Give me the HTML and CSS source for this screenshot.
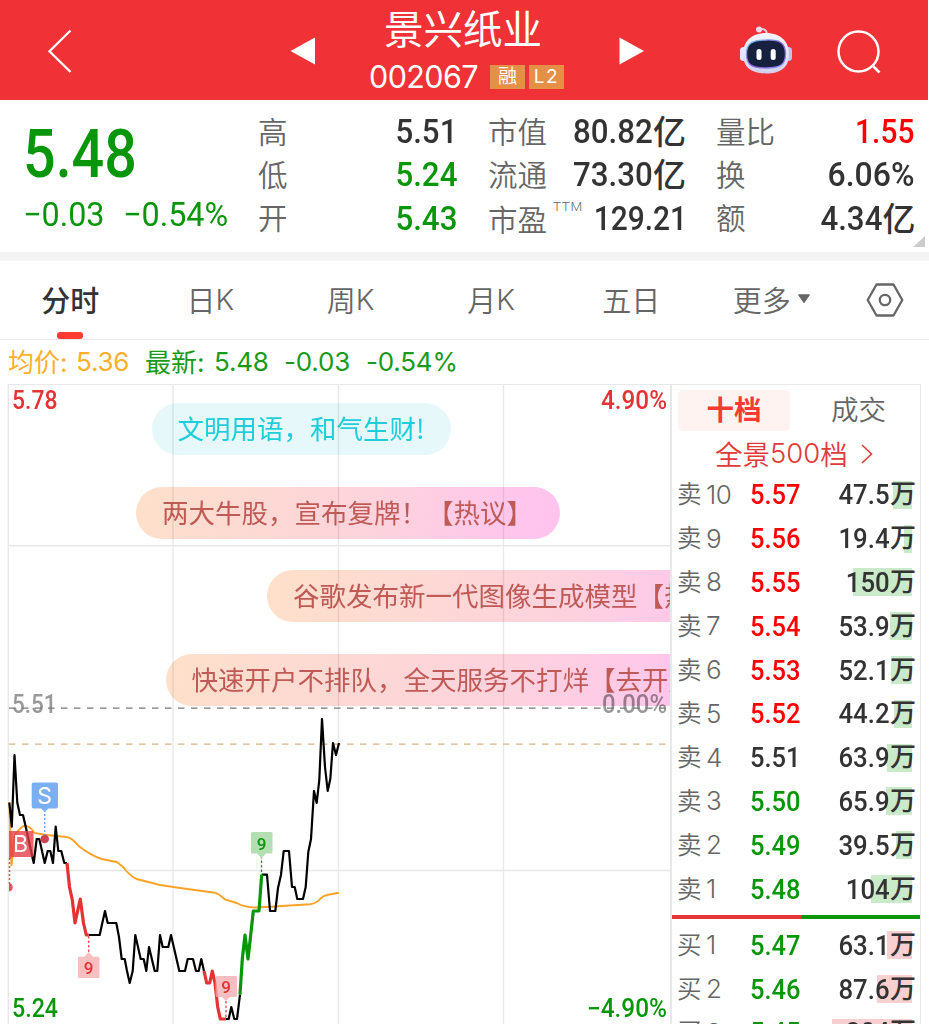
FILE: index.html
```html
<!DOCTYPE html>
<html lang="zh-CN">
<head>
<meta charset="utf-8">
<title>景兴纸业 002067</title>
<link rel="stylesheet" href="styles.css">
</head>
<body>
<div class="app">
  <header class="topbar">
    <svg class="back" width="26" height="44" viewBox="0 0 26 44"><path d="M23.500 1.500L2.500 22.200L23.500 43" fill="none" stroke="#fff" stroke-width="2.300"/></svg>
    <svg class="prev" width="26" height="28" viewBox="0 0 26 28"><path d="M25 0.500V27.500L0.500 14Z" fill="#fff"/></svg>
    <div class="title">
      <div class="name">景兴纸业</div>
      <div class="code-row"><span class="code">002067</span><span class="badge">融</span><span class="badge latin">L2</span></div>
    </div>
    <svg class="next" width="26" height="28" viewBox="0 0 26 28"><path d="M0.500 0.500V27.500L25 14Z" fill="#fff"/></svg>
    <svg class="robot" width="54" height="50" viewBox="0 0 54 50">
      <defs>
        <linearGradient id="shell" x1="0" y1="0" x2="0" y2="1"><stop offset="0" stop-color="#f5f6fd"/><stop offset="1" stop-color="#d3d0ef"/></linearGradient>
        <linearGradient id="rim" x1="0" y1="0" x2="1" y2="1"><stop offset="0" stop-color="#79d5e8"/><stop offset=".5" stop-color="#8c63e8"/><stop offset="1" stop-color="#8c8ff0"/></linearGradient>
      </defs>
      <path d="M20 4.500C25 3 28 5 28 10" fill="none" stroke="#dfc9dc" stroke-width="2"/>
      <circle cx="20" cy="4.500" r="3" fill="#eadced"/>
      <rect x="1" y="22" width="7" height="14" rx="3.500" fill="#e5e7f9"/>
      <rect x="46" y="22" width="7" height="14" rx="3.500" fill="#bfc1ee"/>
      <path d="M27 8C42 8 50 17 50 29C50 43 41 48.500 27 48.500S4 43 4 29C4 17 12 8 27 8Z" fill="url(#shell)"/>
      <path d="M27 15C41 14.500 46.500 18 46.500 29S41 43 27 43S7.500 40 7.500 29S13 15 27 15Z" fill="#17213f" stroke="url(#rim)" stroke-width="1.300"/>
      <rect x="17.500" y="24" width="5" height="11" rx="2.500" fill="#fff"/><rect x="31.700" y="24" width="5" height="11" rx="2.500" fill="#fff"/>
    </svg>
    <svg class="search" width="46" height="44" viewBox="0 0 46 44"><circle cx="21.500" cy="21.500" r="20" fill="none" stroke="#fff" stroke-width="2.500"/><path d="M35 35L42.500 42.500" stroke="#fff" stroke-width="2.700"/></svg>
  </header>

  <section class="quote">
    <div class="last">
      <div class="price"><span class="num">5.48</span></div>
      <div class="change"><span class="num">−0.03</span><span class="num">−0.54%</span></div>
    </div>
    <dl class="stats s1">
      <div><dt>高</dt><dd><span class="num">5.51</span></dd></div>
      <div class="down"><dt>低</dt><dd><span class="num">5.24</span></dd></div>
      <div class="down"><dt>开</dt><dd><span class="num">5.43</span></dd></div>
    </dl>
    <dl class="stats s2">
      <div><dt>市值</dt><dd><span class="num">80.82</span><em>亿</em></dd></div>
      <div><dt>流通</dt><dd><span class="num">73.30</span><em>亿</em></dd></div>
      <div><dt class="low">市盈<sup>TTM</sup></dt><dd><span class="num tight">129.21</span></dd></div>
    </dl>
    <dl class="stats s3">
      <div class="up"><dt>量比</dt><dd><span class="num tight">1.55</span></dd></div>
      <div><dt>换</dt><dd><span class="num wide">6.06%</span></dd></div>
      <div><dt>额</dt><dd><span class="num">4.34</span><em>亿</em></dd></div>
    </dl>
    <i class="expand"></i>
  </section>

  <nav class="tabs">
    <a class="tab active">分时</a><a class="tab">日<b>K</b></a><a class="tab">周<b>K</b></a><a class="tab">月<b>K</b></a><a class="tab">五日</a>
    <a class="tab">更多<svg width="14" height="10" viewBox="0 0 14 10"><path d="M1.500 .8H12.500L7 8.800Z" fill="#666" stroke="#666" stroke-linejoin="round"/></svg></a>
    <svg class="settings" width="38" height="34" viewBox="0 0 38 34"><path d="M10.500 1.500H27.500L36.300 17L27.500 32.500H10.500L1.700 17Z" fill="none" stroke="#666" stroke-width="2.300" stroke-linejoin="round"/><circle cx="19" cy="17" r="5.200" fill="none" stroke="#666" stroke-width="2.300"/></svg>
  </nav>

  <div class="summary"><span class="avg zh">均价:</span><span class="avg">5.36</span><span class="zh">最新:</span><span>5.48</span><span>-0.03</span><span>-0.54%</span></div>

  <main class="board">
    <section class="chart">
      <svg class="plot" width="672" height="640" viewBox="0 384 672 640">
        <g fill="none" stroke="#e8e8e8" stroke-width="1.400">
          <path d="M8 384.300H672M8.300 384V1024M173 384V1024M338.500 384V1024M503.500 384V1024M8 545.700H671M8 870.500H671"/>
        </g>
        <g class="axis">
          <text x="12" y="408.500" class="red" textLength="45.500" lengthAdjust="spacingAndGlyphs">5.78</text>
          <text x="601" y="408.500" class="red" textLength="66" lengthAdjust="spacingAndGlyphs">4.90%</text>
          <text x="12" y="713" class="flat" textLength="44.500" lengthAdjust="spacingAndGlyphs">5.51</text>
          <text x="602" y="713" class="flat" textLength="65" lengthAdjust="spacingAndGlyphs">0.00%</text>
          <text x="12" y="1017" class="green" textLength="46" lengthAdjust="spacingAndGlyphs">5.24</text>
          <text x="587" y="1017" class="green" textLength="80" lengthAdjust="spacingAndGlyphs">−4.90%</text>
        </g>
        <path d="M9 708.200H667" stroke="#777" stroke-width="1.300" stroke-dasharray="6.500 6.500"/>
        <path d="M9 744.200H667" stroke="#d8b480" stroke-width="1.300" stroke-dasharray="6.500 6.500"/>
        <path class="mean" d="M9.300 802L11.500 866L14 838Q16 831 23.500 826Q30 825 34.300 833L46.700 835L66.700 837Q72 838 78.300 845.700Q90 855 101.700 859L116.700 862Q121 865 123 867Q131 877 136.700 879L160 885L180 888L215 892.700Q219 894 225 899.500L236.700 903Q245 907.500 255 907.500L270 906.700L290 905.500L310 904.300Q317 903 320 899Q323 895.700 327 895L339 892.700"/>
        <g class="line">
          <path d="M9.300 802.700L11.800 826.700L14.500 755L17.300 802.700L20 815H23L25.700 826.700L33.700 863L36.700 839H39.300L44.700 863L47.700 851H50.300L53 863L55.700 826.700L58.300 851H61.300L64.300 863H67"/>
          <path d="M88.700 935H99.700L102.300 923L105 911L107.700 923H116.300L119 937L121.700 959H124.700L127 971L129.700 983L132.700 971L135.300 935L138 947L140.700 959H143.700L146.300 971L149 947L154.700 971H157.300L160 935L162.700 947H168.300L171 935L179.300 971H185L187.700 959H193L196 971H198.700L201.300 959L204 971"/>
          <path d="M226 1019H228.700L231.300 1007L234.300 1019H237L240 994.700"/>
          <path d="M261.700 874.700H267L270 911H275.300L278 888L281 874.700L283.700 851H289L292 887H294.700L297.300 899H303L305.700 887L308.300 852L311 839L314 791L316.700 803L319.300 780L322 719L325 767L327.700 791L330.300 779L333 743L336 755L339 743"/>
        </g>
        <g class="signal">
          <path stroke="#e53232" d="M67 863L69.500 887L72.300 900L75 923L80.300 899L83.500 923L86.300 935H88.700M204 971L206.700 983H209.700L212.300 971L215 983L217.700 1007L220.300 1019H226"/>
          <path stroke="#0a960a" d="M240 994.700L242.300 959L245 935L248 959L250.700 935L253.300 911H259L261.700 874.700"/>
        </g>
        <path d="M44.700 810V835" stroke="#6eabf0" stroke-width="1.500" stroke-dasharray="2 2"/><circle cx="44.700" cy="839" r="4.300" fill="#cc4455"/>
        <path d="M33.500 782.500H56Q58 782.500 58 784.500V806.500Q58 808.500 56 808.500H48.500L44.700 812L41 808.500H33.500Q31.700 808.500 31.700 806.500V784.500Q31.700 782.500 33.500 782.500Z" fill="#7aaff3"/>
        <text x="44.700" y="804" class="mark white">S</text>
        <path d="M9.500 858V884" stroke="#e45" stroke-width="1.500" stroke-dasharray="2 2"/><path d="M9 883A4.300 4.300 0 0 1 9 891.500Z" fill="#e4525c"/>
        <path d="M9 831H32Q33.500 831 33.500 833V855Q33.500 857 32 857H12L9 860Z" fill="#e63a42" fill-opacity=".78"/>
        <text x="20.500" y="852" class="mark white">B</text>
        <path d="M88.700 936V954" stroke="#e45" stroke-width="1.300" stroke-dasharray="2.500 2"/><path d="M79.500 956.700H84.500L88.700 952L93 956.700H98Q99.500 956.700 99.500 958V976.700Q99.500 978 98 978H79.500Q78 978 78 976.700V958Q78 956.700 79.500 956.700Z" fill="#f8bfc1"/><text x="88.500" y="973.800" class="mark small redmark">9</text>
        <path d="M226 1001V1017" stroke="#e45" stroke-width="1.300" stroke-dasharray="2.500 2"/><path d="M217 976H235.500Q237 976 237 977.500V995.500Q237 997 235.500 997H230L226 1001L222 997H217Q215.500 997 215.500 995.500V977.500Q215.500 976 217 976Z" fill="#f5aaae" fill-opacity=".75"/><text x="226" y="993.300" class="mark small redmark">9</text>
        <path d="M261.500 856V874" stroke="#0a960a" stroke-width="1.300" stroke-dasharray="2.500 2"/><path d="M252.500 832H271Q272.500 832 272.500 833.500V852Q272.500 853.500 271 853.500H266L261.500 858L257 853.500H252.500Q251 853.500 251 852V833.500Q251 832 252.500 832Z" fill="#b3dfb3"/><text x="261.500" y="849.500" class="mark small greenmark">9</text>
      </svg>
      <div class="pill p1">文明用语，和气生财!</div>
      <div class="pill p2">两大牛股，宣布复牌！【热议】</div>
      <div class="pill p3">谷歌发布新一代图像生成模型【热议】</div>
      <div class="pill p4">快速开户不排队，全天服务不打烊【去开户】</div>
    </section>

    <aside class="book">
      <div class="book-tabs"><span class="on">十档</span><span>成交</span></div>
      <div class="panorama">全景<span>500</span>档<svg width="12" height="22" viewBox="0 0 12 22"><path d="M1 2L10.500 11L1 20" fill="none" stroke="#e23a36" stroke-width="1.600"/></svg></div>
      <div class="levels asks">
        <div class="level up"><span class="side">卖<b>10</b></span><span class="num">5.57</span><span class="vol"><i style="width:19px"></i><span class="num">47.5</span><em>万</em></span></div>
        <div class="level up"><span class="side">卖<b>9</b></span><span class="num">5.56</span><span class="vol"><i style="width:7.500px"></i><span class="num">19.4</span><em>万</em></span></div>
        <div class="level up"><span class="side">卖<b>8</b></span><span class="num">5.55</span><span class="vol"><i style="width:58.700px"></i><span class="num">150</span><em>万</em></span></div>
        <div class="level up"><span class="side">卖<b>7</b></span><span class="num">5.54</span><span class="vol"><i style="width:21.300px"></i><span class="num">53.9</span><em>万</em></span></div>
        <div class="level up"><span class="side">卖<b>6</b></span><span class="num">5.53</span><span class="vol"><i style="width:20.700px"></i><span class="num">52.1</span><em>万</em></span></div>
        <div class="level up"><span class="side">卖<b>5</b></span><span class="num">5.52</span><span class="vol"><i style="width:17.700px"></i><span class="num">44.2</span><em>万</em></span></div>
        <div class="level"><span class="side">卖<b>4</b></span><span class="num">5.51</span><span class="vol"><i style="width:24.300px"></i><span class="num">63.9</span><em>万</em></span></div>
        <div class="level down"><span class="side">卖<b>3</b></span><span class="num">5.50</span><span class="vol"><i style="width:25.300px"></i><span class="num">65.9</span><em>万</em></span></div>
        <div class="level down"><span class="side">卖<b>2</b></span><span class="num">5.49</span><span class="vol"><i style="width:15.300px"></i><span class="num">39.5</span><em>万</em></span></div>
        <div class="level down"><span class="side">卖<b>1</b></span><span class="num">5.48</span><span class="vol"><i style="width:40.300px"></i><span class="num">104</span><em>万</em></span></div>
      </div>
      <div class="ratio"><i></i></div>
      <div class="levels bids">
        <div class="level down"><span class="side">买<b>1</b></span><span class="num">5.47</span><span class="vol"><i style="width:24.700px"></i><span class="num">63.1</span><em>万</em></span></div>
        <div class="level down"><span class="side">买<b>2</b></span><span class="num">5.46</span><span class="vol"><i style="width:34.300px"></i><span class="num">87.6</span><em>万</em></span></div>
        <div class="level down"><span class="side">买<b>3</b></span><span class="num">5.45</span><span class="vol"><i style="width:79.300px"></i><span class="num">204</span><em>万</em></span></div>
      </div>
    </aside>
  </main>
</div>
</body>
</html>
```
FILE: styles.css
```css
* { box-sizing: border-box; }
body {
  margin: 0;
  background: #fff;
  color: #333;
  font-family: Inter, "Noto Sans CJK SC", sans-serif;
}
.app { width: 929px; height: 1024px; overflow: hidden; display: flex; flex-direction: column; }
svg { display: block; flex: none; }
b { font-weight: inherit; }
em { font-style: normal; }
.num { display: inline-block; font-family: Roboto, sans-serif; font-weight: 500; transform-origin: right center; }
.up { color: #f00; }
.down { color: #0a960a; }

/* top bar */
.topbar { width: 928px; height: 99.500px; flex: none; display: flex; align-items: flex-start; background: #f03136; color: #fff; }
.back { margin: 29px 0 0 47px; }
.prev { margin: 37px 0 0 217px; }
.title { width: 196px; margin-left: 51px; }
.name { height: 57px; padding-left: 17px; line-height: 53px; font-size: 39.500px; font-weight: 400; white-space: nowrap; font-family: "Noto Sans CJK SC", sans-serif; }
.code-row { display: flex; align-items: center; height: 40px; }
.code { width: 122px; flex: none; margin-top: -2px; font-size: 30.500px; font-weight: 400; letter-spacing: -.6px; padding-left: 2px; }
.badge { width: 35px; height: 24px; margin: 0 4px 0 0; flex: none; background: #e58f47; font-size: 19px; font-weight: 400; line-height: 23px; text-align: center; }
.badge:first-of-type, .code + .badge { margin-left: 0; }
.code { margin-right: -1px; width: 123px; }
.code + .badge { margin-left: 1px; }
.badge.latin { letter-spacing: 1.500px; }
.code-row { padding-left: 0; width: 200px; }
.next { margin: 37px 0 0 56px; }
.robot { margin: 25px 0 0 94px; }
.search { margin: 30px 0 0 44px; }

/* quote */
.quote { position: relative; height: 161.500px; flex: none; display: flex; border-bottom: 9px solid #f4f4f4; }
.last { width: 258px; padding: 15px 0 0 23px; color: #0a960a; }
.last .num { transform-origin: left center; }
.price { height: 76px; line-height: 76px; font-size: 66px; }
.price .num { transform: scaleX(.87); }
.change { display: flex; height: 48px; line-height: 48px; font-size: 33.500px; }
.change .num { width: 100px; font-weight: 450; transform: scaleX(.965); }
.stats { margin: 10.500px 0 0; }
.stats > div { display: flex; justify-content: space-between; height: 43.300px; line-height: 43.300px; font-size: 34px; }
.stats dt { margin-top: -1.500px; color: #666; font-size: 29.500px; font-weight: 350; white-space: nowrap; font-family: "Noto Sans CJK SC", sans-serif; }
.stats dt.low { padding-top: 2px; }
.stats sup { display: inline-block; margin-left: 6px; font-size: 13.500px; line-height: 15px; vertical-align: 20px; letter-spacing: .6px; width: 28px; font-family: Roboto, sans-serif; }
.stats dd { margin: 0; display: flex; justify-content: flex-end; font-family: "Noto Sans CJK SC", sans-serif; font-weight: 500; font-size: 33px; }
.stats dd em { margin-top: -1px; font-weight: 450; }
.stats .num { transform: scaleX(.92); font-size: 34px; }
.stats .num.wide { transform: scaleX(.94); margin-right: 1.500px; }
.stats .num.tight { transform: scaleX(.88); margin-right: 1px; }
.s1 { width: 199px; }
.s2 { width: 198px; margin-left: 31px; }
.s3 { width: 199.500px; margin-left: 30px; }
.expand { position: absolute; left: 913px; top: 136.500px; border-left: 12px solid transparent; border-bottom: 11px solid #ccc; }

/* period tabs */
.tabs { height: 78.500px; flex: none; display: flex; border-bottom: 1.500px solid #e8e8e8; }
.tab { width: 140.300px; height: 76px; position: relative; display: flex; justify-content: center; align-items: center; font-size: 29px; font-weight: 350; color: #666; }
.tab svg { margin-left: 6px; margin-top: 0; }
.tab.active { font-weight: 500; color: #333; }
.tab.active::after { content: ""; position: absolute; left: 57px; top: 71px; width: 26px; height: 7px; border-radius: 3px; background: #ff3b32; }
.settings { margin: 22px 0 0 24px; }

/* price summary */
.summary { height: 44.500px; flex: none; display: grid; grid-template-columns: 68px 69px 69px 70px 82px 100px; padding-left: 8px; align-items: center; white-space: nowrap; font-size: 26px; letter-spacing: -.2px; color: #1a9a1a; }
.summary .zh { margin-top: -2px; letter-spacing: 0; }
.summary .avg { color: #fbb02d; }

/* chart */
.board { height: 640px; flex: none; display: flex; }
.chart { position: relative; width: 672px; border-right: 2px solid #e8e8e8; overflow: hidden; isolation: isolate; background: #fff; }
.axis { font: 500 25px Roboto, sans-serif; }
.axis .red { fill: #e23434; }
.axis .green { fill: #0a960a; }
.axis .flat { fill: #999; }
.mean { fill: none; stroke: #fba228; stroke-width: 1.900; }
.line { fill: none; stroke: #000; stroke-width: 2.200; stroke-linejoin: round; }
.signal { fill: none; stroke-width: 3.200; stroke-linejoin: round; }
.mark { font: 400 23px Inter, sans-serif; text-anchor: middle; }
.mark.small { font: 500 17px Roboto, sans-serif; }
.white { fill: #fff; }
.redmark { fill: #e53232; }
.greenmark { fill: #0a960a; }
.pill { position: absolute; height: 52px; padding: 0 26px; border-radius: 26px; line-height: 50px; font-size: 26.500px; font-weight: 400; white-space: nowrap; color: #c05a56; font-family: "Noto Sans CJK SC", sans-serif; text-spacing-trim: space-all; mix-blend-mode: multiply; background: linear-gradient(100deg, #fee0ca 0%, #fdd9d4 30%, #fdd2de 60%, #ffc7eb 85%, #ffc3ee 100%); }
.p1 { left: 151.500px; top: 19px; width: 299px; color: #20cddb; background: #e6f8fa; }
.p2 { left: 136px; top: 103px; width: 424px; }
.p3 { left: 267px; top: 186px; width: 503px; }
.p4 { left: 165.500px; top: 270px; width: 582px; }

/* order book */
.book { width: 249px; border-top: 1px solid #e8e8e8; border-right: 1.500px solid #e8e8e8; }
.book-tabs { display: flex; margin: 5px 0 0 6px; height: 41px; }
.book-tabs span { width: 125px; flex: none; text-align: center; line-height: 41px; font-size: 27.500px; font-weight: 350; color: #666; margin-left: 6px; }
.book-tabs .on { width: 112px; margin: 0; border-radius: 5px; background: #fff3f2; color: #f93a35; font-weight: 600; }
.panorama { display: flex; align-items: center; height: 44px; margin-bottom: 2px; padding-left: 43px; font-size: 27.500px; font-weight: 350; color: #e23a36; }
.panorama svg { margin-left: 13px; margin-top: 2px; }
.level { position: relative; display: flex; align-items: center; height: 43.800px; padding: 0 5px 0 5px; }
.asks { margin-top: -4px; }
.side { width: 73px; display: flex; align-items: center; font-size: 24.500px; line-height: 40px; font-weight: 350; color: #666; margin-top: -1px; }
.side b { margin-left: 4.500px; margin-top: 1px; font-size: 26px; letter-spacing: -.5px; }
.level .num { font-size: 28px; }
.level > .num { width: 56px; transform: scaleX(.91); transform-origin: left center; }
.vol { position: relative; isolation: isolate; flex: 1; display: flex; align-items: center; justify-content: flex-end; color: #333; font-size: 26px; font-weight: 450; margin-right: -1px; }
.vol em { margin-top: -1px; line-height: 38px; }
.vol .num { transform: scaleX(.92); font-weight: 500; }
.vol i { position: absolute; z-index: -1; right: 4.500px; top: 50%; height: 28px; margin-top: -14px; background: #c9ebc9; }
.bids .vol i { background: #f9d0d2; }
.ratio { height: 4px; margin-top: 4.500px; background: #0a960a; }
.ratio i { display: block; width: 130px; height: 4px; background: #e63535; }
.bids { margin-top: 4px; }
```
